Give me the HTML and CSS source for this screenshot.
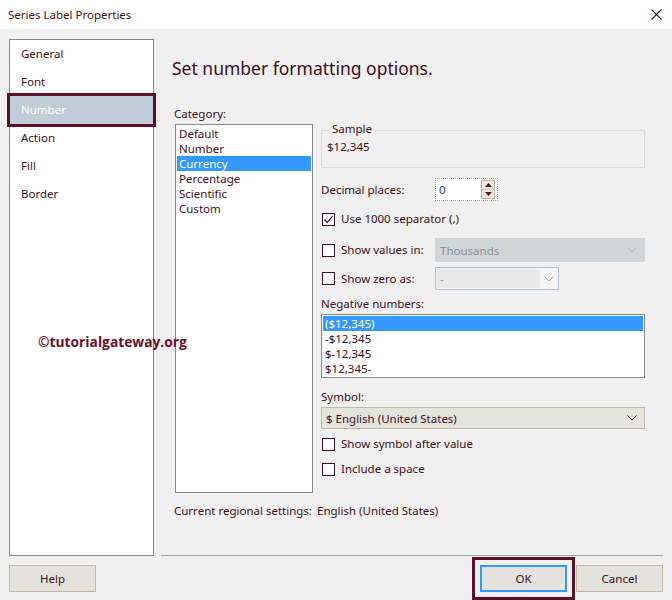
FILE: index.html
```html
<!DOCTYPE html>
<html>
<head>
<meta charset="utf-8">
<link rel="stylesheet" href="styles.css">
</head>
<body>
<div class="window">
  <div class="titlebar">
    <span class="title">Series Label Properties</span>
    <svg class="close" width="11" height="11" viewBox="0 0 11 11"><path d="M0.5 0.5 L10.5 10.5 M10.5 0.5 L0.5 10.5" stroke="#3c0f20" stroke-width="1.1" fill="none"/></svg>
  </div>
  <div class="client">
    <div class="main">
      <nav class="nav">
        <div class="nav-item">General</div>
        <div class="nav-item">Font</div>
        <div class="nav-item selected">Number</div>
        <div class="nav-item">Action</div>
        <div class="nav-item">Fill</div>
        <div class="nav-item">Border</div>
      </nav>
      <div class="content">
        <h1 class="heading">Set number formatting options.</h1>
        <div class="cols">
          <div class="catcol">
            <div class="label">Category:</div>
            <div class="listbox cat">
              <div class="li">Default</div>
              <div class="li">Number</div>
              <div class="li sel">Currency</div>
              <div class="li">Percentage</div>
              <div class="li">Scientific</div>
              <div class="li">Custom</div>
            </div>
          </div>
          <div class="opts">
            <div class="group">
              <div class="legend">Sample</div>
              <div class="sample">$12,345</div>
            </div>
            <div class="row r-decimal">
              <span class="rlabel">Decimal places:</span>
              <div class="spin">
                <span class="spin-val">0</span>
                <div class="spin-btns">
                  <div class="sb"><svg width="7" height="4" viewBox="0 0 7 4"><path d="M3.5 0 L7 4 L0 4 Z" fill="#5a0f2a"/></svg></div>
                  <div class="sb"><svg width="7" height="4" viewBox="0 0 7 4"><path d="M0 0 L7 0 L3.5 4 Z" fill="#5a0f2a"/></svg></div>
                </div>
              </div>
            </div>
            <div class="row r-sep">
              <span class="cb checked"><svg width="11" height="11" viewBox="0 0 11 11"><path d="M1.5 5.5 L4.2 8.3 L9.6 2.2" stroke="#3c0f20" stroke-width="1.2" fill="none"/></svg></span>
              <span class="cblabel">Use 1000 separator (,)</span>
            </div>
            <div class="row r-values">
              <span class="cb"></span>
              <span class="cblabel w-cb">Show values in:</span>
              <div class="combo disabled wide">
                <span class="combo-text">Thousands</span>
                <svg class="chev" width="10" height="6" viewBox="0 0 10 6"><path d="M0.5 0.5 L5 5 L9.5 0.5" stroke="#b5b9bd" stroke-width="1" fill="none"/></svg>
              </div>
            </div>
            <div class="row r-zero">
              <span class="cb"></span>
              <span class="cblabel w-cb">Show zero as:</span>
              <div class="combo zero">
                <span class="combo-field">-</span>
                <span class="combo-arrow"><svg width="10" height="6" viewBox="0 0 10 6"><path d="M0.5 0.5 L5 5 L9.5 0.5" stroke="#b8a78c" stroke-width="1" fill="none"/></svg></span>
              </div>
            </div>
            <div class="label l-neg">Negative numbers:</div>
            <div class="listbox neg">
              <div class="li sel">($12,345)</div>
              <div class="li">-$12,345</div>
              <div class="li">$-12,345</div>
              <div class="li">$12,345-</div>
            </div>
            <div class="label l-sym">Symbol:</div>
            <div class="combo symbol">
              <span class="combo-text">$ English (United States)</span>
              <svg class="chev" width="10" height="6" viewBox="0 0 10 6"><path d="M0.5 0.5 L5 5 L9.5 0.5" stroke="#3c0f20" stroke-width="1" fill="none"/></svg>
            </div>
            <div class="row r-after">
              <span class="cb"></span>
              <span class="cblabel">Show symbol after value</span>
            </div>
            <div class="row r-space">
              <span class="cb"></span>
              <span class="cblabel">Include a space</span>
            </div>
          </div>
        </div>
        <div class="regional">
          <span class="reg-label">Current regional settings:</span>
          <span>English (United States)</span>
        </div>
        <div class="sep"></div>
      </div>
    </div>
    <div class="footer">
      <button class="btn help">Help</button>
      <div class="spacer"></div>
      <button class="btn ok">OK</button>
      <button class="btn cancel">Cancel</button>
    </div>
  </div>
  <div class="watermark">©tutorialgateway.org</div>
</div>
</body>
</html>
```

FILE: styles.css
```css
* { box-sizing: border-box; }
html, body { margin: 0; padding: 0; }
body {
  width: 672px;
  height: 600px;
  overflow: hidden;
  font-family: "Noto Sans", "Open Sans", sans-serif;
  font-size: 11.5px;
  color: #3c0f20;
  white-space: nowrap;
}
.window {
  position: relative;
  width: 672px;
  height: 600px;
  background: #f0f0f0;
  display: flex;
  flex-direction: column;
}
.titlebar {
  height: 29px;
  background: #ffffff;
  display: flex;
  align-items: center;
  justify-content: space-between;
  padding: 0 10px 0 8px;
  flex: none;
}
.title { line-height: 16px; margin-top: 1px; }
.client { flex: 1; display: flex; flex-direction: column; }
.main {
  display: flex;
  padding-top: 10px;
}
.nav {
  margin-left: 9px;
  width: 145px;
  height: 517px;
  background: #ffffff;
  border: 1px solid #828790;
  flex: none;
}
.nav-item {
  height: 28px;
  line-height: 28px;
  padding-left: 11px;
}
.nav-item.selected {
  background: #bfcdd8;
  color: #ffffff;
  outline: 3px solid #5a0f2a;
}
.content {
  flex: 1;
  margin-left: 6px;
  display: flex;
  flex-direction: column;
}
.heading {
  margin: 17px 0 0 12px;
  font-size: 17.5px;
  font-weight: normal;
  line-height: 24px;
  height: 24px;
}
.cols {
  display: flex;
  margin-top: 26px;
  gap: 8px;
}
.catcol { margin-left: 14px; }
.label { line-height: 16px; height: 16px; }
.listbox {
  background: #ffffff;
  border: 1px solid #828790;
  padding: 1px;
}
.li { height: 15px; line-height: 15px; padding-left: 2px; }
.li.sel { background: #3399ff; color: #ffffff; }
.listbox.cat {
  margin-top: 2px;
  margin-left: 1px;
  width: 138px;
  height: 369px;
}
.opts { width: 324px; }
.group {
  margin-top: 24px;
  border: 1px solid #dcdcdc;
  height: 38px;
  padding: 0 5px;
}
.legend {
  width: fit-content;
  margin: -10px 0 0 3px;
  padding: 0 2px;
  background: #f0f0f0;
  line-height: 16px;
}
.sample { margin-top: 2px; line-height: 16px; }
.row { display: flex; align-items: center; }
.rlabel { width: 114px; }
.r-decimal { margin-top: 10px; height: 23px; }
.spin {
  width: 63px;
  height: 23px;
  border: 1px dotted #b3a284;
  background: #ffffff;
  display: flex;
  align-items: center;
  padding: 0 2px 0 2px;
}
.spin-val { flex: 1; color: #1a3d8f; padding-left: 1px; }
.spin-btns {
  width: 14px;
  height: 19px;
  border: 1px solid #c2b295;
  display: flex;
  flex-direction: column;
  background: #ece9e2;
}
.sb { flex: 1; display: flex; align-items: center; justify-content: center; }
.sb + .sb { border-top: 1px dotted #c2b295; }
.cb {
  width: 13px;
  height: 13px;
  border: 1px solid #3c0f20;
  background: #ffffff;
  flex: none;
  display: flex;
  align-items: center;
  justify-content: center;
  margin-left: 1px;
}
.cblabel { margin-left: 6px; line-height: 16px; }
.w-cb { width: 94px; }
.r-sep { margin-top: 10px; height: 16px; }
.r-values { margin-top: 11px; height: 24px; }
.r-zero { margin-top: 5px; height: 23px; }
.combo {
  display: flex;
  align-items: center;
}
.combo.disabled {
  width: 210px;
  height: 24px;
  background: #d2d5d7;
  color: #8d9196;
  padding: 0 8px 0 5px;
  justify-content: space-between;
}
.combo.zero {
  width: 124px;
  height: 23px;
  border: 1px solid #adc1d6;
  background: #f5f5f5;
  padding: 1px;
}
.combo-field {
  width: 103px;
  height: 19px;
  background: #e9e9e9;
  color: #9a9a9a;
  padding-left: 3px;
  line-height: 19px;
}
.combo-arrow { flex: 1; display: flex; justify-content: center; }
.l-neg { margin-top: 6px; }
.listbox.neg { margin-top: 2px; width: 324px; height: 64px; }
.l-sym { margin-top: 11px; }
.combo.symbol {
  margin-top: 2px;
  width: 324px;
  height: 22px;
  background: #e4e4df;
  border: 1px solid #c6b9a3;
  padding: 0 7px 0 4px;
  justify-content: space-between;
}
.r-after { margin-top: 7px; height: 16px; }
.r-space { margin-top: 9px; height: 16px; }
.regional {
  margin: 10px 0 0 14px;
  line-height: 16px;
  display: flex;
}
.reg-label { width: 143px; }
.sep {
  margin-top: auto;
  margin-left: 1px;
  margin-right: 9px;
  border-top: 1px solid #a3a3a3;
  height: 1px;
}
.footer {
  display: flex;
  padding: 9px 9px 0 9px;
  gap: 9px;
}
.spacer { flex: 1; }
.btn {
  width: 87px;
  height: 27px;
  background: #e3e2de;
  border: 1px solid #c6b9a3;
  font-family: "Noto Sans", "Open Sans", sans-serif;
  font-size: 11.5px;
  color: #3c0f20;
  padding: 0;
}
.btn.ok {
  border: 2px solid #3399ff;
  outline: 3px solid #5a0f2a;
  outline-offset: 5px;
}
.watermark {
  position: absolute;
  left: 38px;
  top: 333px;
  font-family: "Open Sans", "Noto Sans", sans-serif;
  font-weight: bold;
  font-size: 13.8px;
  line-height: 18px;
  color: #6a0f2c;
}
```
